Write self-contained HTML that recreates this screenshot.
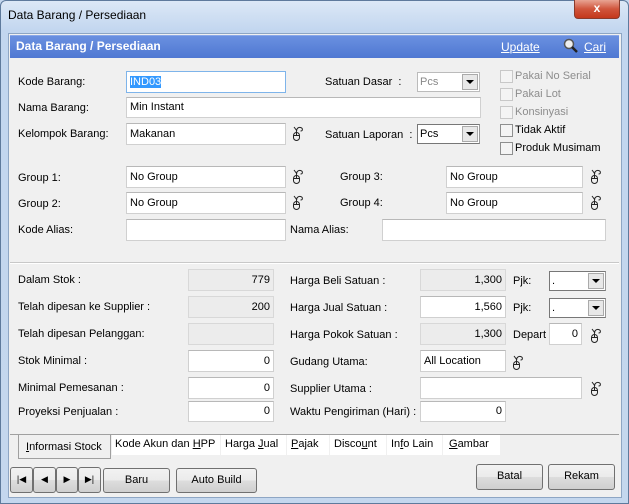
<!DOCTYPE html>
<html><head><style>
*{margin:0;padding:0;box-sizing:border-box}
body{width:629px;height:504px;overflow:hidden;background:#c4d7ee;font-family:"Liberation Sans",sans-serif;font-size:11px;color:#000;position:relative}
div,span{position:absolute}
.l{white-space:nowrap;line-height:13px}
.i{background:#fff;border:1px solid #d0d0d0;border-top-color:#b8b8b8;line-height:20px;padding:0 3px;white-space:nowrap}
.g{background:#ececec;border:1px solid #d8d8d8;line-height:20px;padding:0 3px;text-align:right}
.r{text-align:right}
.s{background:#fff;border:1px solid #777;border-right:1px solid #999;line-height:18px;padding-left:2px}
.s b{position:absolute;right:1px;top:1px;width:16px;height:16px;background:#e8e8e8;border:1px solid #aaa}
.s b:after{content:"";position:absolute;left:3px;top:5px;border-left:4px solid transparent;border-right:4px solid transparent;border-top:4px solid #000}
.c{width:13px;height:13px;border:1px solid #8e8f8f;background:#f4f4f4}
.cd{border-color:#c8c8c8}
.gr{color:#8d8d8d}
.btn{border:1px solid #707070;border-radius:3px;background:linear-gradient(#f2f2f2,#ebebeb 50%,#dddddd 51%,#cfcfcf);text-align:center;line-height:23px}
.tab{top:435px;height:20px;background:#fff;line-height:18px;white-space:nowrap}
</style></head><body>
<div style="left:0;top:0;width:629px;height:504px;border:1px solid #5e7a9c;border-radius:6px 6px 0 0;background:linear-gradient(#dce8f6,#c2d6ef 30px,#c4d7ee)"></div>
<div class="l" style="left:8px;top:9px;font-size:12px">Data Barang / Persediaan</div>
<div style="left:574px;top:0;width:46px;height:19px;border:1px solid #8a3b2c;border-top:none;border-radius:0 0 4px 4px;background:linear-gradient(#e8a493,#d0553c 50%,#c4381c);color:#fff;font-weight:bold;text-align:center;font-size:12px;line-height:17px">x</div>
<div style="left:8px;top:33px;width:614px;height:465px;background:#f0f0f0;border:1px solid #8ea6c4"></div>
<div style="left:10px;top:35px;width:609px;height:23px;background:linear-gradient(#6a90e0,#4f78d2);border-top:1px solid #8aa8e8"></div>
<div class="l" style="left:16px;top:40px;color:#fff;font-weight:bold;font-size:12px">Data Barang / Persediaan</div>
<div class="l" style="left:501px;top:41px;color:#fff;text-decoration:underline;font-size:12px">Update</div>
<svg style="position:absolute;left:563px;top:38px" width="16" height="16"><circle cx="6" cy="6" r="4.5" fill="#eee" stroke="#555" stroke-width="1.5"/><line x1="9" y1="9" x2="14" y2="14" stroke="#222" stroke-width="2.5"/></svg>
<div class="l" style="left:584px;top:41px;color:#fff;text-decoration:underline;font-size:12px">Cari</div>

<div class="l" style="left:18px;top:76px">Kode Barang:</div>
<div class="i" style="left:126px;top:71px;width:160px;height:22px;border-color:#7eb4ea"><span style="position:static;background:#3399ff;color:#fff">IND03</span></div>
<div class="l" style="left:325px;top:76px">Satuan Dasar &nbsp;:</div>
<div class="s" style="left:417px;top:72px;width:63px;height:20px;border-color:#bbb;color:#888">Pcs<b></b></div>
<div class="c cd" style="left:500px;top:70px"></div><div class="l gr" style="left:515px;top:70px">Pakai No Serial</div>
<div class="c cd" style="left:500px;top:88px"></div><div class="l gr" style="left:515px;top:88px">Pakai Lot</div>
<div class="c cd" style="left:500px;top:106px"></div><div class="l gr" style="left:515px;top:106px">Konsinyasi</div>
<div class="c" style="left:500px;top:124px"></div><div class="l" style="left:515px;top:124px">Tidak Aktif</div>
<div class="c" style="left:500px;top:142px"></div><div class="l" style="left:515px;top:142px">Produk Musimam</div>

<div class="l" style="left:18px;top:102px">Nama Barang:</div>
<div class="i" style="left:126px;top:97px;width:355px;height:21px;line-height:19px">Min Instant</div>
<div class="l" style="left:18px;top:128px">Kelompok Barang:</div>
<div class="i" style="left:126px;top:123px;width:160px;height:22px">Makanan</div>
<div class="l" style="left:325px;top:129px">Satuan Laporan &nbsp;:</div>
<div class="s" style="left:417px;top:124px;width:63px;height:20px">Pcs<b></b></div>

<div class="l" style="left:18px;top:172px">Group 1:</div>
<div class="i" style="left:126px;top:166px;width:160px;height:22px">No Group</div>
<div class="l" style="left:340px;top:171px">Group 3:</div>
<div class="i" style="left:446px;top:166px;width:137px;height:22px">No Group</div>
<div class="l" style="left:18px;top:198px">Group 2:</div>
<div class="i" style="left:126px;top:192px;width:160px;height:22px">No Group</div>
<div class="l" style="left:340px;top:197px">Group 4:</div>
<div class="i" style="left:446px;top:192px;width:137px;height:22px">No Group</div>
<div class="l" style="left:18px;top:224px">Kode Alias:</div>
<div class="i" style="left:126px;top:219px;width:160px;height:22px"></div>
<div class="l" style="left:290px;top:224px">Nama Alias:</div>
<div class="i" style="left:382px;top:219px;width:224px;height:22px"></div>

<div style="left:10px;top:262px;width:609px;height:1px;background:#c8c8c8"></div>
<div style="left:10px;top:263px;width:609px;height:1px;background:#fff"></div>

<div class="l" style="left:18px;top:274px">Dalam Stok :</div>
<div class="g" style="left:188px;top:269px;width:86px;height:22px">779</div>
<div class="l" style="left:18px;top:301px">Telah dipesan ke Supplier :</div>
<div class="g" style="left:188px;top:296px;width:86px;height:22px">200</div>
<div class="l" style="left:18px;top:328px">Telah dipesan Pelanggan:</div>
<div class="g" style="left:188px;top:323px;width:86px;height:22px"></div>
<div class="l" style="left:18px;top:355px">Stok Minimal :</div>
<div class="i r" style="left:188px;top:350px;width:86px;height:22px">0</div>
<div class="l" style="left:18px;top:382px">Minimal Pemesanan :</div>
<div class="i r" style="left:188px;top:377px;width:86px;height:22px">0</div>
<div class="l" style="left:18px;top:406px">Proyeksi Penjualan :</div>
<div class="i r" style="left:188px;top:401px;width:86px;height:21px;line-height:19px">0</div>

<div class="l" style="left:290px;top:275px">Harga Beli Satuan :</div>
<div class="g" style="left:420px;top:269px;width:86px;height:22px">1,300</div>
<div class="l" style="left:290px;top:302px">Harga Jual Satuan :</div>
<div class="i r" style="left:420px;top:296px;width:86px;height:22px">1,560</div>
<div class="l" style="left:290px;top:329px">Harga Pokok Satuan :</div>
<div class="g" style="left:420px;top:323px;width:86px;height:22px">1,300</div>
<div class="l" style="left:290px;top:356px">Gudang Utama:</div>
<div class="i" style="left:420px;top:350px;width:86px;height:22px">All Location</div>
<div class="l" style="left:290px;top:383px">Supplier Utama :</div>
<div class="i" style="left:420px;top:377px;width:162px;height:22px"></div>
<div class="l" style="left:290px;top:406px">Waktu Pengiriman (Hari) :</div>
<div class="i r" style="left:420px;top:401px;width:86px;height:21px;line-height:19px">0</div>

<div class="l" style="left:513px;top:275px">Pjk:</div>
<div class="s" style="left:549px;top:271px;width:57px;height:20px">.<b></b></div>
<div class="l" style="left:513px;top:302px">Pjk:</div>
<div class="s" style="left:549px;top:298px;width:57px;height:20px">.<b></b></div>
<div class="l" style="left:513px;top:329px;width:34px;overflow:hidden">Depart</div>
<div class="i r" style="left:549px;top:323px;width:33px;height:22px">0</div>

<svg style="position:absolute;left:0;top:0" width="629" height="504">
<defs>
<g id="m" fill="none" stroke="#222" stroke-width="1"><rect x="0.5" y="6.5" width="6" height="8" rx="3"/><line x1="3.5" y1="6.5" x2="3.5" y2="9"/><line x1="0.5" y1="9.5" x2="6.5" y2="9.5"/><path d="M3.5 6.5 C3 3 5 1 7.5 1.5 C10 2 10 5 7.5 5 M1 1 L4 5"/></g>
</defs>
<use href="#m" x="293" y="126"/><use href="#m" x="293" y="169"/><use href="#m" x="293" y="195"/>
<use href="#m" x="591" y="169"/><use href="#m" x="591" y="195"/><use href="#m" x="591" y="328"/>
<use href="#m" x="513" y="355"/><use href="#m" x="591" y="381"/>
</svg>

<div style="left:10px;top:434px;width:609px;height:1px;background:#a0a0a0"></div>
<div style="left:18px;top:435px;width:93px;height:24px;background:#f0f0f0;border:1px solid #a0a0a0;border-top:none"></div>
<div class="l" style="left:26px;top:441px"><u>I</u>nformasi Stock</div>
<div class="tab" style="left:112px;width:108px;padding-left:3px">Kode Akun dan <u>H</u>PP</div>
<div class="tab" style="left:221px;width:65px;padding-left:4px">Harga <u>J</u>ual</div>
<div class="tab" style="left:287px;width:42px;padding-left:4px"><u>P</u>ajak</div>
<div class="tab" style="left:330px;width:56px;padding-left:4px">Disco<u>u</u>nt</div>
<div class="tab" style="left:387px;width:55px;padding-left:4px">In<u>f</u>o Lain</div>
<div class="tab" style="left:443px;width:57px;padding-left:6px"><u>G</u>ambar</div>

<div class="btn" style="left:10px;top:467px;width:23px;height:26px;font-size:9px">|◀</div>
<div class="btn" style="left:33px;top:467px;width:23px;height:26px;font-size:9px">◀</div>
<div class="btn" style="left:56px;top:467px;width:22px;height:26px;font-size:9px">▶</div>
<div class="btn" style="left:78px;top:467px;width:23px;height:26px;font-size:9px">▶|</div>
<div class="btn" style="left:103px;top:468px;width:67px;height:25px">Baru</div>
<div class="btn" style="left:176px;top:468px;width:81px;height:25px">Auto Build</div>
<div class="btn" style="left:476px;top:464px;width:67px;height:26px">Batal</div>
<div class="btn" style="left:548px;top:464px;width:67px;height:26px">Rekam</div>
</body></html>
